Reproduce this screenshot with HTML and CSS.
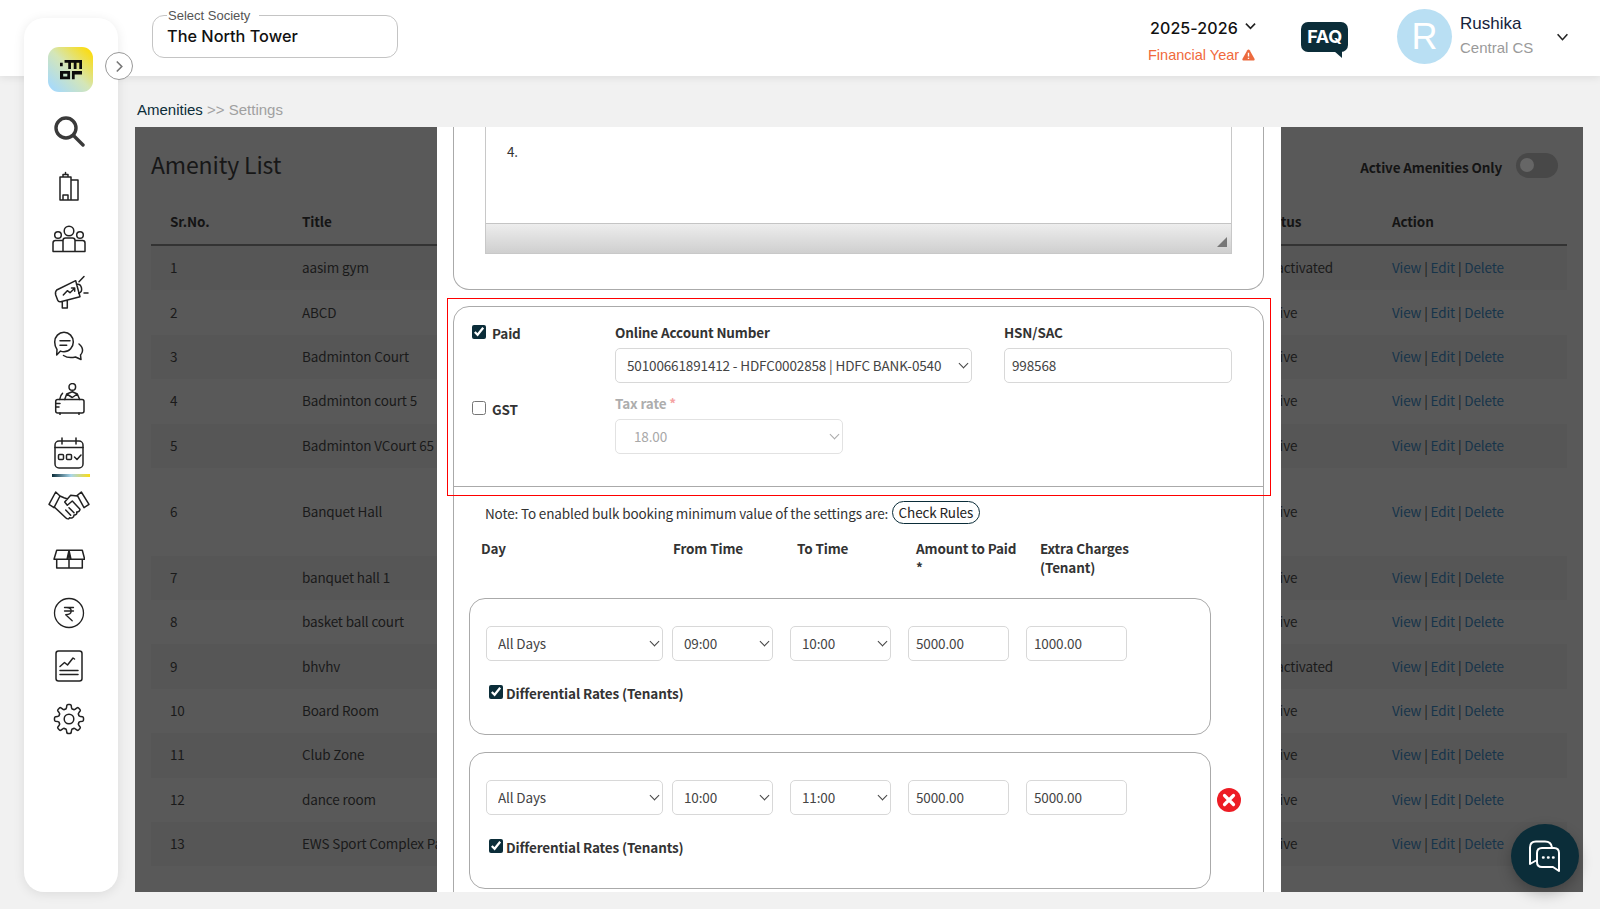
FILE: index.html
```html
<!DOCTYPE html>
<html lang="en">
<head>
<meta charset="utf-8">
<title>Amenities Settings</title>
<link rel="stylesheet" href="styles.css">
</head>
<body>
<header class="topbar">
  <fieldset class="society">
    <legend>Select Society</legend>
    <div class="society-value">The North Tower</div>
  </fieldset>
  <div class="year">
    <div class="year-value">2025-2026
      <svg class="chev-s" viewBox="0 0 12 8"><path d="M1 1.500l5 5 5-5"/></svg>
    </div>
    <div class="year-label">Financial Year
      <svg class="warn" viewBox="0 0 14 13"><path d="M7 .5c.6 0 1 .3 1.300.8l5.200 9.200c.5 1-.1 2-1.200 2H1.700c-1.100 0-1.700-1-1.200-2l5.200-9.200C6 .8 6.400.5 7 .5z" fill="#ec6a3e"/><path d="M7 4v4M7 9.600v1.200" stroke="#fff" stroke-width="1.500" fill="none"/></svg>
    </div>
  </div>
  <div class="faq">FAQ</div>
  <div class="avatar">R</div>
  <div class="user">
    <div class="user-name">Rushika</div>
    <div class="user-role">Central CS</div>
  </div>
  <svg class="chev-m" viewBox="0 0 14 9"><path d="M1.500 1.500l5.500 6 5.500-6"/></svg>
</header>

<nav class="sidebar">
  <div class="logo">
    <svg viewBox="0 0 24 22" width="24" height="22"><path d="M0 3h3v4H0zM5 0h19v10h-3V3h-3v7h-3V3h-3v7H9V3H5zM0 12h11v9H0zM3.500 15v3h4.500v-3zM13 12h11v4h-8v5h-3z" fill="#0c0c0c" fill-rule="evenodd"/></svg>
  </div>
  <div class="nav-item">
    <svg class="ico thick" viewBox="0 0 32 32" width="32" height="32"><circle cx="13" cy="12" r="10"/><path d="M20.500 19.500L30 29"/></svg>
  </div>
  <div class="nav-item">
    <svg class="ico" viewBox="0 0 22 30" width="22" height="30"><path d="M2 6h11v23H2zM13 9h7v20h-7zM5 6V3.500h5V6M7.500 3.500V1.500M5 29v-5h5v5"/></svg>
  </div>
  <div class="nav-item">
    <svg class="ico" viewBox="0 0 34 28" width="34" height="28"><circle cx="17" cy="6" r="4.800"/><circle cx="6" cy="10" r="3.300"/><circle cx="28" cy="10" r="3.300"/><path d="M11 26V15.500c0-1.500 1-2.500 2.500-2.500h7c1.500 0 2.500 1 2.500 2.500V26M1 26v-8c0-1.500 1-2.500 2.500-2.500H11M33 26v-8c0-1.500-1-2.500-2.500-2.500H23M1 26.500h32"/></svg>
  </div>
  <div class="nav-item">
    <svg class="ico ico-free" viewBox="0 0 36 32" width="36" height="32"><path d="M5.700 14L24.700 4.700 29 20.700 9.700 25.700c-1.500.3-2.500-.2-3-1.500l-2-5.200c-.5-2 0-4 1-5zM11.300 26v6h5v-7.500M25.500 8.500c2.800-.6 4.500 1.300 5 3.500.5 2.500-.5 4.500-2.800 5.200M28 5.700L33 .5M33 17h4M12.300 19l4-4.300 2.700 2 4.700-4.400M20.500 12h3.200v3.200"/></svg>
  </div>
  <div class="nav-item">
    <svg class="ico" viewBox="0 0 32 30" width="32" height="30"><path d="M11 1.300c5.200 0 9.300 4.300 9.300 9.700 0 5-4 9.700-9.300 9.700-1.200 0-2.500-.2-3.500-.6L3.700 24l.3-5.500C2.500 16.500 1.700 13.700 1.700 11 1.700 5.600 5.800 1.300 11 1.300z"/><path d="M7 9.700h10M7 14.300h6.700M26 13c2.500 2 3.800 4 3.500 7-.2 1.500-1 3-2 4l.5 4.500-5.500-2.500c-4 1-9 .5-12-1.500"/></svg>
  </div>
  <div class="nav-item">
    <svg class="ico" viewBox="0 0 32 32" width="32" height="32"><circle cx="19.300" cy="3.900" r="3.300"/><rect x="2.700" y="16.500" width="28.300" height="13.500" rx="2"/><path d="M11.700 16.500L13.700 11l5.600-2.300 5 2.300 2.400 5.500M13.700 11l5.600 3.500 5-3.500M6.700 16.500C7 13.500 8 11.500 9.500 10.300M2.700 20.500H7M2.700 24H6M7 30v1.500M26 30v1.500"/></svg>
  </div>
  <div class="nav-item current">
    <svg class="ico" viewBox="0 0 30 32" width="30" height="32"><rect x="1" y="4" width="28" height="27" rx="4"/><path d="M8 1v6M22 1v6M1 10.500h28"/><rect x="4.500" y="17.500" width="5" height="5" rx="1"/><rect x="12.500" y="17.500" width="5" height="5" rx="1"/><path d="M20.500 20l2.500 2.500 4-4.500"/></svg>
  </div>
  <div class="nav-item">
    <svg class="ico" viewBox="0 0 42 30" width="42" height="30"><path d="M7.700 1L1 13.300l5 3.400L12 5zM33.300 1L41 13.300l-5 3.400L29.300 4.300zM12 5l4 1.700 3.500 1.300M29.300 5l-6.600-.7-6 6.700 2.600 3.300 5-4.300 7.700 8.300M6 15.700l11.700 11c1.500 1.500 3.300 1.600 3.800.1 2.200.9 4.500-.5 4.500-2.800 2 .2 3.300-1 2.700-3 1.700.3 3.200-1 3.300-2.700M17.700 19l5 5.300M21 16.700l5 5"/></svg>
  </div>
  <div class="nav-item">
    <svg class="ico" viewBox="0 0 32 22" width="32" height="22"><path d="M3.700 2.300H29.300L31.700 11.300H1zM3.700 11.300V20H29.300V11.300M16 2.300V20M16 2.300l-2 9M16 2.300l2 9"/></svg>
  </div>
  <div class="nav-item">
    <svg class="ico ico-thin" viewBox="0 0 32 32" width="32" height="32"><circle cx="16" cy="16" r="14.500"/><path d="M11.500 10.500h9M11.500 14h9M13.500 10.500c3.500 0 4.700 1.500 4.700 3.500s-1.700 3.700-5.500 3.700l6.500 6"/></svg>
  </div>
  <div class="nav-item">
    <svg class="ico" viewBox="0 0 28 32" width="28" height="32"><rect x="1" y="1" width="26" height="30" rx="2.500"/><path d="M5 16.500l4.500-4 3 2.500 5.500-7 1.500 1M5 20.500h18M5 24.500h18"/></svg>
  </div>
  <div class="nav-item">
    <svg class="ico" viewBox="0 0 32 32" width="32" height="32">
      <defs><path id="tooth" d="M11.980 6.300C13 6.300 13.400 5.600 13.500 4.600L13.800 2.500Q14 1.500 15 1.500L17 1.500Q18 1.500 18.200 2.500L18.500 4.600C18.600 5.600 19 6.300 20.020 6.300"/></defs>
      <use href="#tooth"/><use href="#tooth" transform="rotate(45 16 16)"/><use href="#tooth" transform="rotate(90 16 16)"/><use href="#tooth" transform="rotate(135 16 16)"/><use href="#tooth" transform="rotate(180 16 16)"/><use href="#tooth" transform="rotate(225 16 16)"/><use href="#tooth" transform="rotate(270 16 16)"/><use href="#tooth" transform="rotate(315 16 16)"/>
      <circle cx="16" cy="16" r="4.800"/>
    </svg>
  </div>
</nav>
<button class="collapse" type="button"><svg viewBox="0 0 10 14" width="9" height="13"><path d="M2 1.500l5.500 5.500-5.500 5.500"/></svg></button>

<main class="main">
  <div class="crumbs"><span class="crumb-on">Amenities</span> &gt;&gt; Settings</div>
  <section class="card">
    <div class="card-head">
      <h1>Amenity List</h1>
      <div class="active-only"><span>Active Amenities Only</span><span class="switch"></span></div>
    </div>
    <div class="row head"><span>Sr.No.</span><span>Title</span><span>Status</span><span>Action</span></div>
    <div class="row odd"><span>1</span><span>aasim gym</span><span>Deactivated</span><span class="acts"><a>View</a> | <a>Edit</a> | <a>Delete</a></span></div>
    <div class="row"><span>2</span><span>ABCD</span><span>Active</span><span class="acts"><a>View</a> | <a>Edit</a> | <a>Delete</a></span></div>
    <div class="row odd"><span>3</span><span>Badminton Court</span><span>Active</span><span class="acts"><a>View</a> | <a>Edit</a> | <a>Delete</a></span></div>
    <div class="row"><span>4</span><span>Badminton court 5</span><span>Active</span><span class="acts"><a>View</a> | <a>Edit</a> | <a>Delete</a></span></div>
    <div class="row odd"><span>5</span><span>Badminton VCourt 65</span><span>Active</span><span class="acts"><a>View</a> | <a>Edit</a> | <a>Delete</a></span></div>
    <div class="row tall"><span>6</span><span>Banquet Hall</span><span>Active</span><span class="acts"><a>View</a> | <a>Edit</a> | <a>Delete</a></span></div>
    <div class="row odd"><span>7</span><span>banquet hall 1</span><span>Active</span><span class="acts"><a>View</a> | <a>Edit</a> | <a>Delete</a></span></div>
    <div class="row"><span>8</span><span>basket ball court</span><span>Active</span><span class="acts"><a>View</a> | <a>Edit</a> | <a>Delete</a></span></div>
    <div class="row odd"><span>9</span><span>bhvhv</span><span>Deactivated</span><span class="acts"><a>View</a> | <a>Edit</a> | <a>Delete</a></span></div>
    <div class="row"><span>10</span><span>Board Room</span><span>Active</span><span class="acts"><a>View</a> | <a>Edit</a> | <a>Delete</a></span></div>
    <div class="row odd"><span>11</span><span>Club Zone</span><span>Active</span><span class="acts"><a>View</a> | <a>Edit</a> | <a>Delete</a></span></div>
    <div class="row"><span>12</span><span>dance room</span><span>Active</span><span class="acts"><a>View</a> | <a>Edit</a> | <a>Delete</a></span></div>
    <div class="row odd"><span>13</span><span>EWS Sport Complex Park</span><span>Active</span><span class="acts"><a>View</a> | <a>Edit</a> | <a>Delete</a></span></div>

    <div class="modal">
      <div class="panel-top">
        <div class="editor">
          <div class="editor-body">4.</div>
          <div class="editor-foot"><span class="grip"></span></div>
        </div>
      </div>
      <div class="panel">
        <div class="charge-grid">
          <label class="chk chk-paid"><input type="checkbox" checked>Paid</label>
          <div class="field">
            <div class="lbl">Online Account Number</div>
            <div class="sel"><select class="ctl"><option>50100661891412 - HDFC0002858 | HDFC BANK-0540</option></select></div>
          </div>
          <div class="field">
            <div class="lbl">HSN/SAC</div>
            <input class="ctl ctl-in" value="998568">
          </div>
          <label class="chk chk-gst"><input type="checkbox">GST</label>
          <div class="field field-tax">
            <div class="lbl lbl-off">Tax rate <span class="req">*</span></div>
            <div class="sel sel-off"><select class="ctl" disabled><option>18.00</option></select></div>
          </div>
        </div>
        <div class="rates">
          <div class="note">Note: To enabled bulk booking minimum value of the settings are: <span class="pill">Check Rules</span></div>
          <div class="rate-head">
            <span>Day</span><span>From Time</span><span>To Time</span><span class="col-amount">Amount to Paid *</span><span>Extra Charges (Tenant)</span>
          </div>
          <div class="rate-line">
            <div class="rate-card">
              <div class="rate-fields">
                <div class="sel w-day"><select class="ctl"><option>All Days</option></select></div>
                <div class="sel w-from"><select class="ctl"><option>09:00</option></select></div>
                <div class="sel w-to"><select class="ctl"><option>10:00</option></select></div>
                <input class="ctl ctl-num w-to" value="5000.00">
                <input class="ctl ctl-num w-to" value="1000.00">
              </div>
              <label class="chk chk-diff"><input type="checkbox" checked>Differential Rates (Tenants)</label>
            </div>
          </div>
          <div class="rate-line">
            <div class="rate-card">
              <div class="rate-fields">
                <div class="sel w-day"><select class="ctl"><option>All Days</option></select></div>
                <div class="sel w-from"><select class="ctl"><option>10:00</option></select></div>
                <div class="sel w-to"><select class="ctl"><option>11:00</option></select></div>
                <input class="ctl ctl-num w-to" value="5000.00">
                <input class="ctl ctl-num w-to" value="5000.00">
              </div>
              <label class="chk chk-diff"><input type="checkbox" checked>Differential Rates (Tenants)</label>
            </div>
            <svg class="remove" viewBox="0 0 24 24" width="24" height="24"><circle cx="12" cy="12" r="12" fill="#ed1c24"/><path d="M7.500 7.500l9 9M16.500 7.500l-9 9" stroke="#fff" stroke-width="3.200" stroke-linecap="round"/></svg>
          </div>
        </div>
      </div>
      <div class="callout"></div>
    </div>
  </section>
</main>

<button class="chat" type="button">
  <svg viewBox="0 0 34 34" width="34" height="34" fill="none" stroke="#fff" stroke-width="2" stroke-linejoin="round"><path d="M24 8.500C23.500 4.500 21 2.500 17 2.500H8C4 2.500 2 5 2 8.500V25l6-3.500"/><path d="M14 9h12c3 0 5 2 5 5v18l-6-4H14c-3 0-5-2-5-5v-9c0-3 2-5 5-5z"/><path d="M15 18.500h.6M20 18.500h.6M25 18.500h.6" stroke-linecap="round" stroke-width="2.400"/></svg>
</button>
</body>
</html>
```
FILE: styles.css
```css
* { box-sizing: border-box; }
html, body { margin: 0; height: 909px; overflow: hidden; }
body { background: #f1f1f1; font-family: "Noto Sans CJK JP", "Noto Sans", sans-serif; color: #333; position: relative; letter-spacing: -.14px; }

/* top bar */
.topbar { height: 76px; background: #fff; box-shadow: 0 2px 8px rgba(0,0,0,.08); display: flex; align-items: flex-start; padding-left: 152px; font-family: Inter, "Liberation Sans", sans-serif; position: relative; letter-spacing: 0; }
.society { width: 246px; height: 49px; margin: 9px 0 0; padding: 0 14px; border: 1px solid #c4c4c4; border-radius: 12px; }
.society legend { font-family: "Liberation Sans", sans-serif; font-size: 13px; line-height: 1; color: #555; padding: 0 9px 0 1px; }
.society-value { font-size: 16.300px; font-weight: 500; line-height: 22px; color: #111; margin-top: 3px; }
.year { margin: 18px 0 0 750px; width: 120px; }
.year-value { font-size: 16px; font-weight: 500; letter-spacing: .1px; color: #111; line-height: 20px; margin-left: 2px; display: flex; align-items: center; gap: 7px; }
.chev-s { width: 11px; height: 8px; margin-top: -4px; }
.chev-s path, .chev-m path { fill: none; stroke: #222; stroke-width: 1.800; }
.year-label { font-family: "Liberation Sans", sans-serif; font-size: 14.500px; color: #f0693c; line-height: 18px; margin-top: 8px; display: flex; align-items: center; gap: 3px; white-space: nowrap; }
.warn { width: 13px; height: 12px; }
.faq { margin: 22px 0 0 33px; width: 47px; height: 30px; background: #0b2d39; color: #fff; font-weight: 700; font-size: 18px; line-height: 30px; text-align: center; border-radius: 7px; position: relative; letter-spacing: -.3px; }
.faq::after { content: ""; position: absolute; right: 6px; bottom: -6px; border-top: 7px solid #0b2d39; border-left: 8px solid transparent; }
.avatar { margin: 9px 0 0 49px; width: 55px; height: 55px; border-radius: 50%; background: #b9dff3; color: #fff; font-family: "Liberation Sans", sans-serif; font-size: 36px; line-height: 55px; text-align: center; }
.user { margin: 13px 0 0 8px; width: 96px; font-family: "Liberation Sans", sans-serif; }
.user-name { font-size: 17px; line-height: 22px; color: #16233b; }
.user-role { font-size: 15px; line-height: 20px; color: #9a9a9a; margin-top: 3px; }
.chev-m { width: 13px; height: 8px; margin-top: 33px; }

/* sidebar */
.sidebar { position: absolute; left: 24px; top: 18px; width: 94px; height: 874px; background: #fff; border-radius: 20px; box-shadow: 0 2px 12px rgba(0,0,0,.09); display: flex; flex-direction: column; align-items: center; padding-top: 29px; }
.logo { width: 45px; height: 45px; margin-left: -1px; border-radius: 11px; background: linear-gradient(45deg, #a9daf7 10%, #d4e6b8 50%, #fbdc12 92%); display: flex; align-items: center; justify-content: center; margin-bottom: 13.500px; }
.logo svg { transform: scale(.92); }
.nav-item { height: 53.400px; width: 100%; display: flex; align-items: center; justify-content: center; position: relative; margin-left: -4px; flex: none; }
.nav-item.current::after { content: ""; position: absolute; left: 30px; right: 26px; bottom: 2px; height: 3px; background: linear-gradient(90deg, #0b2d39, #a8d6ea 50%, #fbdc12); }
.ico { fill: none; stroke: #222; stroke-width: 1.500; stroke-linejoin: round; stroke-linecap: round; }
.ico.thick { stroke: #3a3a3a; stroke-width: 3.400; }
.ico-thin { stroke-width: 1.300; }
.ico-free { overflow: visible; }
.collapse { position: absolute; left: 105px; top: 52px; width: 28px; height: 28px; padding: 0; border-radius: 50%; background: #fff; border: 1px solid #999; display: flex; align-items: center; justify-content: center; }
.collapse path { fill: none; stroke: #777; stroke-width: 1.800; }

/* main */
.main { padding-left: 135px; width: 1583px; }
.crumbs { height: 51px; padding: 24px 0 0 2px; font-family: "Liberation Sans", sans-serif; font-size: 15px; line-height: 20px; color: #a0a0a0; letter-spacing: 0; }
.crumb-on { color: #0b2d39; }
.card { position: relative; height: 765px; background: #595959; padding: 0 16px; color: #1a1a1a; font-size: 13.500px; overflow: hidden; }
.card-head { height: 76px; display: flex; align-items: center; justify-content: space-between; padding: 0 9px 0 0; }
.card-head h1 { margin: -2px 0 0; font-size: 23px; font-weight: 400; line-height: 34px; color: #171717; }
.active-only { display: flex; align-items: center; gap: 14px; font-weight: 700; font-size: 13.500px; color: #141414; margin-top: 4px; }
.switch { width: 42px; height: 25px; border-radius: 13px; background: #484848; position: relative; margin-top: -3px; }
.switch::before { content: ""; position: absolute; left: 4px; top: 5px; width: 14px; height: 14px; border-radius: 50%; background: #666; }
.row { display: grid; grid-template-columns: 132px 958px 132px 1fr; padding: 0 0 2px 19px; height: 44.400px; align-items: center; white-space: nowrap; }
.row.odd { background: #565656; }
.row.tall { height: 87.600px; }
.row.head { height: 43px; font-weight: 700; color: #141414; border-bottom: 2px solid #333; align-items: flex-start; padding: 7px 0 0 19px; background: none; line-height: 22px; }
.acts { color: #1b1b1b; }
.acts a { color: #16344a; }

/* modal */
.modal { position: absolute; left: 302px; top: 0; width: 844px; height: 765px; background: #fff; overflow: hidden; padding: 0 17px 0 16px; font-size: 13.500px; }
.panel-top { height: 163px; border: 1px solid #aaa; border-top: 0; border-radius: 0 0 16px 16px; padding: 0 31px; }
.editor { height: 127px; border: 1px solid #c8c8c8; border-top: 0; display: flex; flex-direction: column; }
.editor-body { height: 97px; padding: 14px 21px; line-height: 20px; color: #333; }
.editor-foot { height: 30px; border-top: 1px solid #c4c4c4; background: linear-gradient(#ededed, #cfcfcf); position: relative; }
.grip { position: absolute; right: 4px; bottom: 6px; border-bottom: 10px solid #777; border-left: 10px solid transparent; }
.panel { margin-top: 16px; height: 700px; border: 1px solid #aaa; border-radius: 16px 16px 0 0; }
.charge-grid { display: grid; grid-template-columns: 111px 357px 228px; column-gap: 32px; grid-template-rows: 61px 60px; row-gap: 10px; padding: 15px 0 33px 18px; border-bottom: 1px solid #aaa; height: 180px; }
.field { display: flex; flex-direction: column; }
.field-tax { grid-column: 2 / 4; }
.lbl { font-weight: 700; line-height: 20px; color: #333; margin-bottom: 6px; }
.lbl-off { color: #adadad; }
.req { color: #f5a3a3; }
.chk { display: flex; align-items: center; font-weight: 700; line-height: 20px; color: #333; align-self: start; white-space: nowrap; }
.chk input { width: 14px; height: 14px; margin: -2px 6px 0 0; accent-color: #0b2d39; }
.chk-paid { padding-top: 1px; }
.chk-gst { padding-top: 6px; }
.sel { position: relative; }
.ctl { display: block; width: 100%; height: 35px; border: 1px solid #d8d8d8; border-radius: 5px; background: #fff; font: inherit; letter-spacing: -.14px; color: #444; padding: 0 11px 2px; appearance: none; outline: 0; }
.ctl-in { padding: 0 7px 2px; }
.ctl-num { padding: 0 7px 2px; }
.sel::after { content: ""; position: absolute; right: 5px; top: 12px; width: 6px; height: 6px; border-right: 1px solid #444; border-bottom: 1px solid #444; transform: rotate(45deg); pointer-events: none; }
.sel-off { width: 228px; }
.sel-off .ctl { background: #fff; color: #a8a8a8; padding-left: 18px; border-color: #e2e2e2; opacity: 1; }
.sel-off::after { border-color: #aaa; }

/* rates */
.rates { padding-left: 15px; }
.note { display: flex; align-items: center; gap: 4px; height: 23px; margin-top: 14px; padding-left: 16px; color: #333; white-space: nowrap; }
.pill { display: inline-block; height: 23px; padding: 0 5.500px; border: 1px solid #0b2d39; border-radius: 12px; line-height: 21px; color: #222; }
.rate-head { display: grid; grid-template-columns: 192px 124px 119px 124px 110px; padding-left: 12px; margin-top: 15px; height: 59px; font-weight: 700; line-height: 19px; color: #333; }
.col-amount { padding-right: 22px; }
.rate-line { display: flex; align-items: flex-start; gap: 6px; margin-bottom: 17px; }
.rate-card { width: 742px; height: 137px; border: 1px solid #aaa; border-radius: 16px; padding: 27px 16px 0; }
.rate-fields { display: flex; gap: 17px; }
.rate-fields .w-day { margin-right: -8px; }
.w-day { width: 177px; }
.w-from { width: 101px; }
.w-to { width: 101px; }
.chk-diff { margin: 22px 0 0 3px; }
.chk-diff input { margin-right: 3px; }
.remove { margin-top: 36px; flex: none; }
.callout { position: absolute; left: 10px; top: 171px; width: 824px; height: 198px; border: 1px solid #f00; }

.chat { position: absolute; left: 1511px; top: 824px; width: 68px; height: 64px; border: 0; border-radius: 50%; background: #0b2d39; box-shadow: 0 6px 14px rgba(0,0,0,.25); display: flex; align-items: center; justify-content: center; padding: 0; }
```
